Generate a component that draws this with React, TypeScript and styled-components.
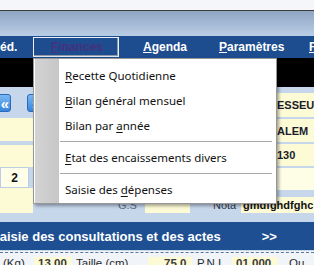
import React from 'react'
import styled, { createGlobalStyle } from 'styled-components'

const GlobalStyle = createGlobalStyle`
  html, body {
    margin: 0;
    padding: 0;
    background: #f3f6fb;
  }
  body {
    overflow: hidden;
  }
`

const Screen = styled.div`
  position: relative;
  width: 314px;
  height: 265px;
  overflow: hidden;
  font-family: "Liberation Sans", Arial, sans-serif;
  background: #f1f5fa;
`

const TitleStrip = styled.div`
  height: 10px;
  background: #f4f6fa;
  border-bottom: 1px solid #3c3c3c;
`

const HeaderBand = styled.div`
  height: 25px;
  background: linear-gradient(#8fa6c3, #bacde6);
`

const MenuBar = styled.div`
  display: flex;
  align-items: center;
  height: 22px;
  background: #1d4d8e;
  white-space: nowrap;
  overflow: hidden;
`

const MenuTitle = styled.div<{ $w?: number; $ml?: number }>`
  flex: none;
  width: ${({ $w }) => ($w ? `${$w}px` : 'auto')};
  margin-left: ${({ $ml }) => $ml ?? 0}px;
  color: #fff;
  font-size: 12px;
  font-weight: bold;
  u {
    text-underline-offset: 1px;
  }
`

const ActiveTitle = styled.div`
  flex: none;
  box-sizing: border-box;
  width: 86px;
  height: 20px;
  display: flex;
  align-items: center;
  padding-left: 17px;
  border: 1px solid #edf1f7;
  border-bottom-color: #dfe5ee;
  box-shadow: inset -1px -1px 0 #8e98a6;
  background: #1d4d8e;
  color: #45307f;
  font-size: 12px;
  font-weight: bold;
`

const Toolbar = styled.div`
  height: 29px;
  background: #000;
`

const FormArea = styled.div`
  display: flex;
  box-sizing: border-box;
  height: 135px;
  background: #c6d7ec;
`

const LeftCol = styled.div`
  flex: none;
  width: 33px;
  display: flex;
  flex-direction: column;
`

const NavRow = styled.div`
  display: flex;
  height: 18px;
  margin-top: 7px;
  margin-left: -4px;
  gap: 16px;
`

const NavButton = styled.div`
  flex: none;
  box-sizing: border-box;
  width: 15px;
  height: 18px;
  display: flex;
  align-items: center;
  justify-content: center;
  padding-left: 3px;
  border: 1px solid #2a6abb;
  border-radius: 3px;
  background: linear-gradient(#7ab8f3, #3685dd);
  color: #fff;
  font-size: 15px;
  font-weight: bold;
  line-height: 1;
`

const CreamBlock = styled.div<{ $h: number; $mt?: number }>`
  height: ${({ $h }) => $h}px;
  margin-top: ${({ $mt }) => $mt ?? 0}px;
  background: #fdfbd6;
`

const NumberBox = styled.div`
  box-sizing: border-box;
  width: 29px;
  height: 21px;
  display: flex;
  align-items: center;
  justify-content: center;
  border: 1px solid #bccde2;
  background: #fffee9;
  color: #111;
  font-size: 12px;
  font-weight: bold;
`

const MainCol = styled.div`
  flex: 1;
  display: flex;
  flex-direction: column;
`

const Upper = styled.div`
  display: flex;
  justify-content: flex-end;
`

const RightCol = styled.div`
  width: 37px;
  display: flex;
  flex-direction: column;
  gap: 2px;
  padding-top: 6px;
`

const InfoCell = styled.div<{ $h: number; $light?: boolean }>`
  height: ${({ $h }) => $h}px;
  display: flex;
  align-items: center;
  background: ${({ $light }) => ($light ? '#fefde6' : '#fdfbd6')};
  color: #1b1b2a;
  font-size: 11px;
  font-weight: bold;
  white-space: nowrap;
  overflow: hidden;
`

const NotaRow = styled.div`
  display: flex;
  align-items: stretch;
  height: 16px;
  margin-top: 7px;
  padding-left: 85px;
  white-space: nowrap;
`

const FieldLabel = styled.div<{ $w: number; $pl?: number; $dark?: boolean }>`
  flex: none;
  box-sizing: border-box;
  width: ${({ $w }) => $w}px;
  padding-left: ${({ $pl }) => $pl ?? 0}px;
  display: flex;
  align-items: center;
  color: ${({ $dark }) => ($dark ? '#2f3a4a' : '#5b6e8c')};
  font-size: 11px;
`

const FieldBox = styled.div<{ $w?: number }>`
  flex: ${({ $w }) => ($w ? 'none' : '1')};
  width: ${({ $w }) => ($w ? `${$w}px` : 'auto')};
  display: flex;
  align-items: center;
  padding-left: 2px;
  background: #fdfbd6;
  color: #111;
  font-size: 11px;
  font-weight: bold;
  overflow: hidden;
`

const ActionBar = styled.div`
  display: flex;
  align-items: center;
  height: 28px;
  background: #1e4f93;
  color: #fff;
  font-size: 13px;
  font-weight: bold;
  white-space: nowrap;
`

const ActionTitle = styled.span`
  margin-left: -9px;
`

const ActionNext = styled.span`
  margin-left: 41px;
`

const BottomArea = styled.div`
  border-top: 1px solid #c6d7ec;
`

const MeasureRow = styled.div`
  display: flex;
  align-items: center;
  height: 15px;
  margin-top: 1px;
  border-top: 1px dashed #5f7896;
  padding-top: 2px;
  white-space: nowrap;
  font-size: 11.5px;
  color: #2a2a2a;
`

const MeasureLabel = styled.div<{ $w: number; $pl?: number }>`
  flex: none;
  box-sizing: border-box;
  width: ${({ $w }) => $w}px;
  padding-left: ${({ $pl }) => $pl ?? 0}px;
`

const MeasureValue = styled.div<{ $w: number; $pl: number }>`
  flex: none;
  box-sizing: border-box;
  width: ${({ $w }) => $w}px;
  padding-left: ${({ $pl }) => $pl}px;
  background: #fdfbd6;
  font-weight: bold;
  color: #3a3a3a;
`

const DropMenu = styled.div`
  position: absolute;
  left: 33px;
  top: 58px;
  box-sizing: border-box;
  width: 244px;
  padding: 4px 0 1px 0;
  border: 1px solid #979797;
  background: linear-gradient(to right, #fff 0 1px, #d3d3d3 1px, #c7c7c7 25px, #fff 25px);
  box-shadow: 2px 2px 3px rgba(0, 0, 0, 0.35);
  font-family: "Noto Sans", "Open Sans", sans-serif;
  font-size: 11.5px;
  color: #111;
`

const DropItem = styled.div`
  height: 25px;
  display: flex;
  align-items: center;
  padding-left: 31px;
  white-space: nowrap;
  u {
    text-underline-offset: 2px;
  }
`

const DropSeparator = styled.div`
  height: 7px;
  display: flex;
  align-items: center;
  margin: 0 4px 0 26px;
  &::after {
    content: '';
    flex: 1;
    border-top: 1px solid #a8a8a8;
  }
`

export default function App() {
  return (
    <Screen>
      <GlobalStyle />
      <TitleStrip />
      <HeaderBand />
      <MenuBar>
        <MenuTitle $w={33}>éd.</MenuTitle>
        <ActiveTitle>
          <span>
            <u>F</u>inances
          </span>
        </ActiveTitle>
        <MenuTitle $w={76} $ml={24}>
          <u>A</u>genda
        </MenuTitle>
        <MenuTitle $w={90}>
          <u>P</u>aramètres
        </MenuTitle>
        <MenuTitle>
          <u>F</u>enêtres
        </MenuTitle>
      </MenuBar>
      <Toolbar />
      <FormArea>
        <LeftCol>
          <NavRow>
            <NavButton>«</NavButton>
            <NavButton>»</NavButton>
          </NavRow>
          <CreamBlock $h={23} $mt={6} />
          <CreamBlock $h={22} $mt={4} />
          <NumberBox>2</NumberBox>
          <CreamBlock $h={25} />
        </LeftCol>
        <MainCol>
          <Upper>
            <RightCol>
              <InfoCell $h={24}>ESSEUR</InfoCell>
              <InfoCell $h={23}>ALEM</InfoCell>
              <InfoCell $h={22}>130</InfoCell>
              <InfoCell $h={22} $light />
            </RightCol>
          </Upper>
          <NotaRow>
            <FieldLabel $w={27}>G.S</FieldLabel>
            <FieldBox $w={43} />
            <FieldLabel $w={51} $pl={23} $dark>
              Nota
            </FieldLabel>
            <FieldBox>gmdfghdfghc</FieldBox>
          </NotaRow>
        </MainCol>
      </FormArea>
      <ActionBar>
        <ActionTitle>Saisie des consultations et des actes</ActionTitle>
        <ActionNext>&gt;&gt;</ActionNext>
      </ActionBar>
      <BottomArea>
        <MeasureRow>
          <MeasureLabel $w={34} $pl={3}>(Kg)</MeasureLabel>
          <MeasureValue $w={38} $pl={4}>13.00</MeasureValue>
          <MeasureLabel $w={76} $pl={4}>Taille (cm)</MeasureLabel>
          <MeasureValue $w={44} $pl={16}>75.0</MeasureValue>
          <MeasureLabel $w={40} $pl={5}>P.N.I</MeasureLabel>
          <MeasureValue $w={46} $pl={4}>01.000</MeasureValue>
          <MeasureLabel $w={40} $pl={11}>Ou</MeasureLabel>
        </MeasureRow>
      </BottomArea>
      <DropMenu>
        <DropItem>
          <span>
            <u>R</u>ecette Quotidienne
          </span>
        </DropItem>
        <DropItem>
          <span>
            <u>B</u>ilan général mensuel
          </span>
        </DropItem>
        <DropItem>
          <span>
            Bilan par <u>a</u>nnée
          </span>
        </DropItem>
        <DropSeparator />
        <DropItem>
          <span>
            <u>E</u>tat des encaissements divers
          </span>
        </DropItem>
        <DropSeparator />
        <DropItem>
          <span>
            Saisie des <u>d</u>épenses
          </span>
        </DropItem>
      </DropMenu>
    </Screen>
  )
}
